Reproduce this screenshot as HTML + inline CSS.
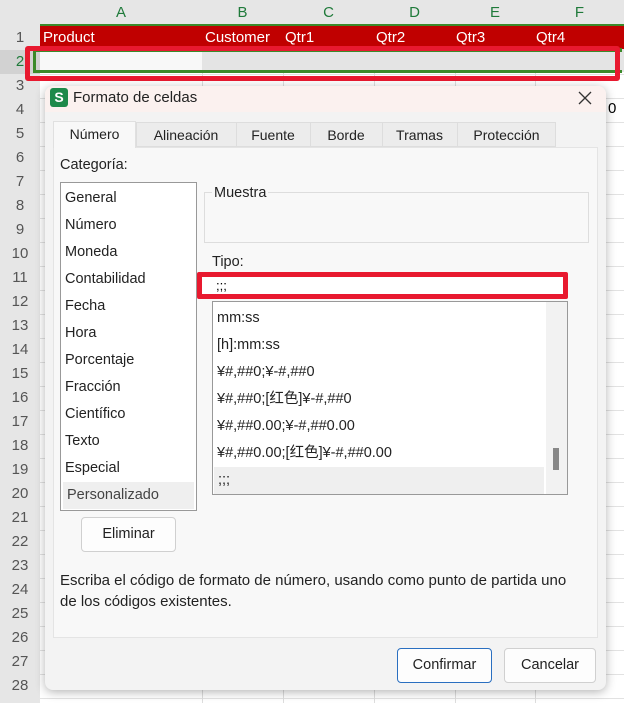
<!DOCTYPE html>
<html><head><meta charset="utf-8"><style>
*{box-sizing:border-box;margin:0;padding:0}
body{width:624px;height:703px;overflow:hidden;background:#fff;font-family:"Liberation Sans","Noto Sans CJK SC",sans-serif;position:relative}
.abs{position:absolute}
.hdr{background:#e6e6e6;height:25px;top:0;left:0;width:624px}
.col{top:0;height:25px;color:#1f7a3a;font-size:15px;text-align:center;line-height:25px}
.rown{left:0;width:40px;text-align:center;color:#555;font-size:15px;height:24px;line-height:24px;background:#e6e6e6}
.vl{width:1px;background:#ddd;top:25px;height:678px}
.hl{height:1px;background:#e2e2e2;left:40px;width:584px}
.dlg{left:45px;top:86px;width:561px;height:604px;background:#f3f3f3;border-radius:8px;box-shadow:0 2px 10px rgba(0,0,0,.3)}
.t{font-size:14.5px;color:#222}
.tab{font-size:14px;color:#222;text-align:center;top:41px}
.lst div{height:27px;line-height:27px;padding-left:4px;font-size:14.5px;color:#222}
.btn{background:#fdfdfd;border:1px solid #d0d0d0;border-radius:4px;text-align:center;font-size:14.5px;color:#222}
</style></head><body>
<div class="abs hdr"></div>
<div class="abs" style="left:0;top:25px;width:40px;height:678px;background:#e6e6e6"></div>
<div class="abs col" style="left:40px;width:162px">A</div>
<div class="abs col" style="left:202px;width:81px">B</div>
<div class="abs col" style="left:283px;width:91px">C</div>
<div class="abs col" style="left:374px;width:81px">D</div>
<div class="abs col" style="left:455px;width:80px">E</div>
<div class="abs col" style="left:535px;width:89px">F</div>
<div id="rows"></div>
<div class="abs vl" style="left:202px"></div><div class="abs vl" style="left:283px"></div><div class="abs vl" style="left:374px"></div><div class="abs vl" style="left:455px"></div><div class="abs vl" style="left:535px"></div>
<script>
var h='';for(var i=1;i<=28;i++){var y=26+(i-1)*24;h+='<div class="abs rown" style="top:'+y+'px;'+(i==2?'background:#d2d2d2;color:#1f7a3a':'')+'">'+i+'</div><div class="abs hl" style="top:'+(y+24)+'px"></div>';}
document.getElementById('rows').innerHTML=h;
</script>
<div class="abs" style="left:40px;top:24px;width:584px;height:2px;background:#3b8a2a"></div>
<div class="abs" style="left:40px;top:26px;width:584px;height:23px;background:#c00000;color:#fff;font-size:15px;line-height:24px">
<span class="abs" style="left:3px">Product</span><span class="abs" style="left:165px">Customer</span><span class="abs" style="left:245px">Qtr1</span><span class="abs" style="left:336px">Qtr2</span><span class="abs" style="left:416px">Qtr3</span><span class="abs" style="left:496px">Qtr4</span></div>
<div class="abs" style="left:40px;top:49px;width:584px;height:23px;background:#e4e4e4"></div>
<div class="abs" style="left:40px;top:49px;width:162px;height:23px;background:#f8f8f8"></div>
<div class="abs" style="left:33px;top:48px;width:589px;height:4px;background:#3b8a2a"></div>
<div class="abs" style="left:33px;top:70px;width:589px;height:3px;background:#3b8a2a"></div>
<div class="abs" style="left:33px;top:48px;width:3px;height:25px;background:#3b8a2a"></div>
<div class="abs" style="left:25px;top:46px;width:595px;height:35px;border:5px solid #e8192f;border-radius:3px"></div>
<div class="abs" style="left:608px;top:100px;font-size:15px">0</div>
<div class="abs dlg">
 <div class="abs" style="left:0;top:0;width:561px;height:26px;background:#fbf1ef;border-radius:8px 8px 0 0"></div>
 <div class="abs" style="left:5px;top:2px;width:18px;height:19px;background:#1d8a4a;border-radius:3px;color:#fff;font-weight:bold;font-size:14px;text-align:center;line-height:19px">S</div>
 <div class="abs t" style="left:28px;top:3px;font-size:15px">Formato de celdas</div>
 <svg class="abs" style="left:533px;top:5px" width="14" height="14"><path d="M1 1L13 13M13 1L1 13" stroke="#333" stroke-width="1.3"/></svg>
 <div class="abs" style="left:8px;top:61px;width:545px;height:491px;background:#f8f8f8;border:1px solid #e4e4e4"></div>
 <div class="abs" style="left:91px;top:36px;width:420px;height:25px;background:#ececec;border:1px solid #ddd"></div>
 <div class="abs" style="left:8px;top:35px;width:83px;height:27px;background:#f8f8f8;border:1px solid #e0e0e0;border-bottom:none"></div>
 <div class="abs tab" style="left:8px;width:83px;top:40px">Número</div>
 <div class="abs tab" style="left:91px;width:100px">Alineación</div>
 <div class="abs tab" style="left:191px;width:74px">Fuente</div>
 <div class="abs tab" style="left:265px;width:72px">Borde</div>
 <div class="abs tab" style="left:337px;width:75px">Tramas</div>
 <div class="abs tab" style="left:412px;width:99px">Protección</div>
 <div class="abs" style="left:191px;top:36px;width:1px;height:25px;background:#ddd"></div>
 <div class="abs" style="left:265px;top:36px;width:1px;height:25px;background:#ddd"></div>
 <div class="abs" style="left:337px;top:36px;width:1px;height:25px;background:#ddd"></div>
 <div class="abs" style="left:412px;top:36px;width:1px;height:25px;background:#ddd"></div>
 <div class="abs t" style="left:15px;top:71px">Categoría:</div>
 <div class="abs lst" style="left:15px;top:96px;width:137px;height:329px;background:#fff;border:1px solid #999;padding-top:2px">
  <div>General</div><div>Número</div><div>Moneda</div><div>Contabilidad</div><div>Fecha</div><div>Hora</div><div>Porcentaje</div><div>Fracción</div><div>Científico</div><div>Texto</div><div>Especial</div><div style="background:#efefef;margin:0 2px;color:#444">Personalizado</div>
 </div>
 <div class="abs" style="left:159px;top:106px;width:385px;height:51px;border:1px solid #ddd"></div>
 <div class="abs t" style="left:167px;top:99px;background:#f8f8f8;padding:0 2px">Muestra</div>
 <div class="abs t" style="left:167px;top:168px">Tipo:</div>
 <div class="abs" style="left:152px;top:186px;width:371px;height:27px;border:5px solid #e8192f;border-radius:2px;background:#fff;font-size:13px;padding-left:14px;line-height:18px">;;;</div>
 <div class="abs lst" style="left:167px;top:215px;width:356px;height:194px;background:#fff;border:1px solid #999;padding-top:3px">
  <div>mm:ss</div><div>[h]:mm:ss</div><div>¥#,##0;¥-#,##0</div><div>¥#,##0;[红色]¥-#,##0</div><div>¥#,##0.00;¥-#,##0.00</div><div>¥#,##0.00;[红色]¥-#,##0.00</div><div style="background:#efefef;width:330px;margin-left:1px">;;;</div>
  <div class="abs" style="right:0;top:0;width:21px;height:192px;background:#f2f2f2"></div>
  <div class="abs" style="right:8px;top:146px;width:6px;height:22px;background:#888"></div>
 </div>
 <div class="abs btn" style="left:36px;top:431px;width:95px;height:35px;line-height:33px">Eliminar</div>
 <div class="abs t" style="left:15px;top:484px;line-height:21px;width:520px;font-size:15px">Escriba el código de formato de número, usando como punto de partida uno de los códigos existentes.</div>
 <div class="abs btn" style="left:352px;top:562px;width:95px;height:35px;line-height:33px;border-color:#2a6fc0">Confirmar</div>
 <div class="abs btn" style="left:459px;top:562px;width:92px;height:35px;line-height:33px">Cancelar</div>
</div>
</body></html>
